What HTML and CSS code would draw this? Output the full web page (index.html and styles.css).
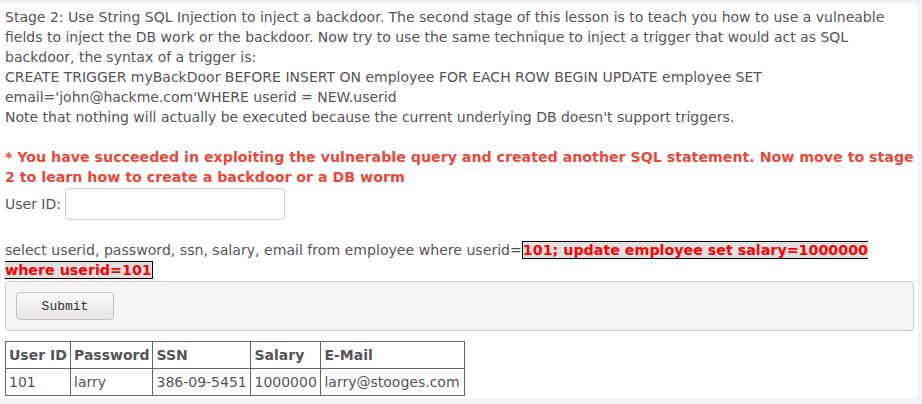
FILE: index.html
```html
<!DOCTYPE html>
<html>
<head>
<meta charset="utf-8">
<link rel="stylesheet" href="styles.css">
</head>
<body>
<div class="panel">
  <div class="intro">Stage 2: Use String SQL Injection to inject a backdoor. The second stage of this lesson is to teach you how to use a vulneable fields to inject the DB work or the backdoor. Now try to use the same technique to inject a trigger that would act as SQL backdoor, the syntax of a trigger is:<br>CREATE TRIGGER myBackDoor BEFORE INSERT ON employee FOR EACH ROW BEGIN UPDATE employee SET email='john@hackme.com'WHERE userid = NEW.userid<br>Note that nothing will actually be executed because the current underlying DB doesn't support triggers.</div>
  <div class="success">* You have succeeded in exploiting the vulnerable query and created another SQL statement. Now move to stage 2 to learn how to create a backdoor or a DB worm</div>
  <div class="userrow">User ID: <input class="field" type="text"></div>
  <div class="query">select userid, password, ssn, salary, email from employee where userid=<span class="inj">101; update employee set salary=1000000 where userid=101</span></div>
  <div class="formbox"><button class="btn">Submit</button></div>
  <table class="results">
    <tr><th class="c1">User ID</th><th class="c2">Password</th><th class="c3">SSN</th><th class="c4">Salary</th><th class="c5">E-Mail</th></tr>
    <tr><td>101</td><td>larry</td><td>386-09-5451</td><td>1000000</td><td>larry@stooges.com</td></tr>
  </table>
</div>
</body>
</html>
```
FILE: styles.css
```css
html, body {
  margin: 0;
  padding: 0;
  background: #f1f2f6;
}
body {
  font-family: "DejaVu Sans", sans-serif;
  font-size: 14px;
  line-height: 20px;
  color: #555;
}
.panel {
  background: #fff;
  margin: 3px 4px 0 0;
  height: 396px;
  padding: 4px 4px 0 5px;
  border-radius: 0 6px 6px 0;
  overflow: hidden;
  box-sizing: border-box;
}
.intro {
  margin-bottom: 20px;
}
.success {
  color: #e8493b;
  font-weight: bold;
  font-size: 14.2px;
}
.userrow {
  margin-top: 1px;
  height: 32px;
  display: flex;
  align-items: center;
}
.field {
  margin: 0 0 0 4px;
  width: 220px;
  height: 32px;
  box-sizing: border-box;
  border: 1px solid #ccc;
  border-radius: 4px;
  padding: 0 6px;
  font: inherit;
}
.query {
  margin-top: 20px;
  padding-right: 8px;
  font-size: 14.1px;
}
.inj {
  color: #f00;
  font-weight: bold;
  font-size: 14.25px;
  background: #e0e0e0;
  border: 1px solid #000;
}
.formbox {
  margin-top: 1px;
  height: 50px;
  background: #f4f4f4;
  border: 1px solid #ccc;
  border-radius: 4px;
  padding: 10px 0 0 10px;
  box-sizing: border-box;
}
.btn {
  width: 98px;
  height: 28px;
  font-family: "Liberation Mono", monospace;
  font-size: 13px;
  color: #333;
  background: linear-gradient(#fafafa, #e8e6e3);
  border: 1px solid #c8c4c0;
  border-radius: 4px;
  padding: 0;
}
.results {
  margin-top: 10px;
  border-collapse: collapse;
}
.results th, .results td {
  border: 1px solid #666;
  padding: 3px 3px;
  text-align: left;
  height: 20px;
  white-space: nowrap;
}
.results th {
  font-weight: bold;
}
.c1 { width: 58px; }
.c2 { width: 75px; }
.c3 { width: 91px; }
.c4 { width: 63px; }
.c5 { width: 137px; }
```
